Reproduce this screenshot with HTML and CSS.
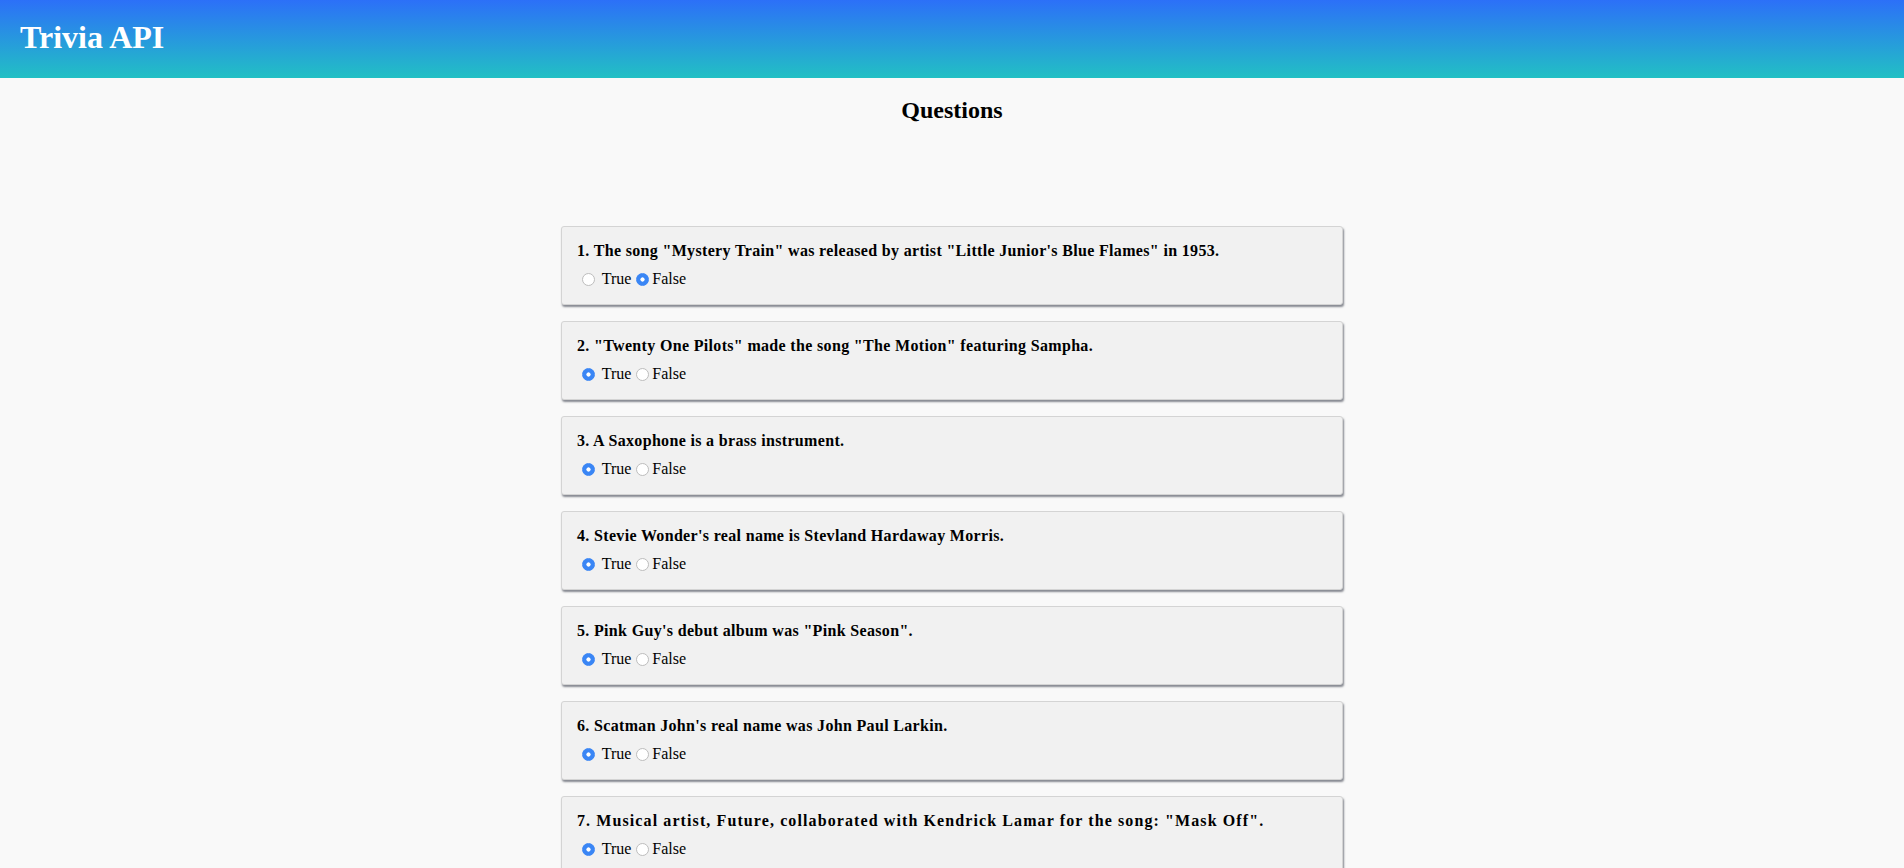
FILE: index.html
```html
<!DOCTYPE html>
<html lang="en">
<head>
<meta charset="utf-8">
<title>Trivia API</title>
<link rel="stylesheet" href="styles.css">
</head>
<body>
<header class="topbar">
  <h1 class="brand">Trivia API</h1>
</header>
<main class="page">
  <h2 class="page-title">Questions</h2>
  <form class="quiz">
    <div class="card">
      <p class="question">1. The song "Mystery Train" was released by artist "Little Junior's Blue Flames" in 1953.</p>
      <div class="options"><label><input type="radio" name="q1" class="radio"> True</label><label><input type="radio" name="q1" class="radio" checked>False</label></div>
    </div>
    <div class="card">
      <p class="question">2. "Twenty One Pilots" made the song "The Motion" featuring Sampha.</p>
      <div class="options"><label><input type="radio" name="q2" class="radio" checked> True</label><label><input type="radio" name="q2" class="radio">False</label></div>
    </div>
    <div class="card">
      <p class="question">3. A Saxophone is a brass instrument.</p>
      <div class="options"><label><input type="radio" name="q3" class="radio" checked> True</label><label><input type="radio" name="q3" class="radio">False</label></div>
    </div>
    <div class="card">
      <p class="question">4. Stevie Wonder's real name is Stevland Hardaway Morris.</p>
      <div class="options"><label><input type="radio" name="q4" class="radio" checked> True</label><label><input type="radio" name="q4" class="radio">False</label></div>
    </div>
    <div class="card">
      <p class="question">5. Pink Guy's debut album was "Pink Season".</p>
      <div class="options"><label><input type="radio" name="q5" class="radio" checked> True</label><label><input type="radio" name="q5" class="radio">False</label></div>
    </div>
    <div class="card">
      <p class="question">6. Scatman John's real name was John Paul Larkin.</p>
      <div class="options"><label><input type="radio" name="q6" class="radio" checked> True</label><label><input type="radio" name="q6" class="radio">False</label></div>
    </div>
    <div class="card">
      <p class="question question-wide">7. Musical artist, Future, collaborated with Kendrick Lamar for the song: "Mask Off".</p>
      <div class="options"><label><input type="radio" name="q7" class="radio" checked> True</label><label><input type="radio" name="q7" class="radio">False</label></div>
    </div>
    <div class="card">
      <p class="question">8. The Beatles released their first album in 1963.</p>
      <div class="options"><label><input type="radio" name="q8" class="radio" checked> True</label><label><input type="radio" name="q8" class="radio">False</label></div>
    </div>
    <div class="card">
      <p class="question">9. Ludwig van Beethoven composed nine symphonies.</p>
      <div class="options"><label><input type="radio" name="q9" class="radio" checked> True</label><label><input type="radio" name="q9" class="radio">False</label></div>
    </div>
    <div class="card">
      <p class="question">10. The violin has four strings.</p>
      <div class="options"><label><input type="radio" name="q10" class="radio" checked> True</label><label><input type="radio" name="q10" class="radio">False</label></div>
    </div>
  </form>
</main>
</body>
</html>
```
FILE: styles.css
```css
html, body {
  margin: 0;
  padding: 0;
}
body {
  background: #f9f9f9;
  font-family: "Liberation Serif", "Times New Roman", serif;
  color: #000;
}
.topbar {
  box-sizing: border-box;
  height: 78px;
  padding: 19px 20px 0;
  background: linear-gradient(to bottom, #2c70f8, #22c0c4);
}
.brand {
  margin: 0;
  font-size: 32px;
  font-weight: bold;
  color: #fff;
}
.page {
  display: flex;
  flex-direction: column;
  align-items: center;
}
.page-title {
  margin: 19px 0 0;
  font-size: 24px;
  font-weight: bold;
}
.quiz {
  margin-top: 102px;
  width: 782px;
  display: flex;
  flex-direction: column;
  gap: 16px;
  padding-bottom: 16px;
}
.card {
  box-sizing: border-box;
  background: #f1f1f1;
  border: 1px solid #d4d4d4;
  border-radius: 3px;
  box-shadow: 1px 2px 2px rgba(40, 45, 60, 0.55);
  padding: 15px 15px 16px;
}
.question {
  margin: 0 0 10px;
  font-size: 16px;
  font-weight: bold;
  letter-spacing: 0.33px;
}
.question-wide {
  letter-spacing: 1.1px;
}
.options {
  font-size: 16px;
}
.radio {
  appearance: none;
  -webkit-appearance: none;
  box-sizing: border-box;
  width: 13px;
  height: 13px;
  margin: 3px 3px 0 5px;
  border: 1px solid #bdbdbd;
  border-radius: 50%;
  background: #fff;
  vertical-align: -2px;
}
.radio:checked {
  border-color: #3a86f5;
  background: radial-gradient(circle, #fff 0 1.8px, #3a86f5 2.4px);
}
```
